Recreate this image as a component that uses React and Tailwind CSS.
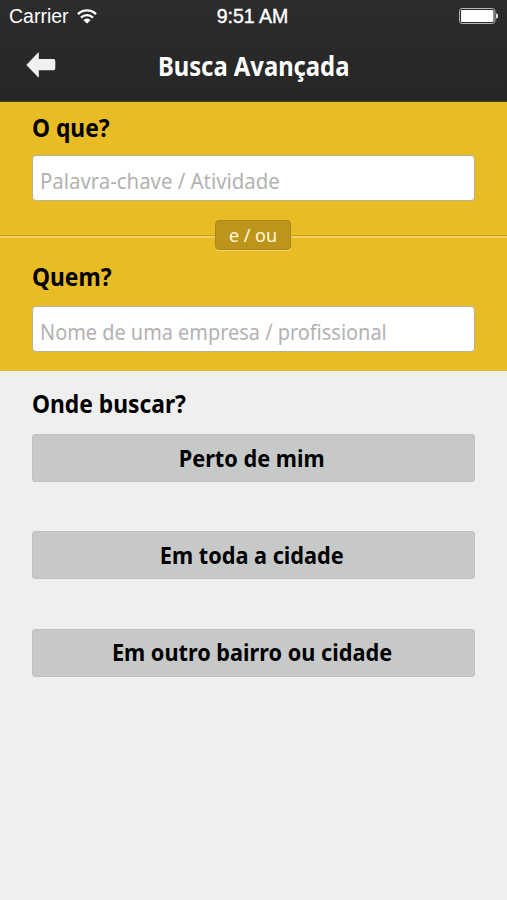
const places = [
  { id: 'near', label: 'Perto de mim' },
  { id: 'city', label: 'Em toda a cidade' },
  { id: 'other', label: 'Em outro bairro ou cidade' },
];

function WifiIcon() {
  return (
    <svg className="ml-[8px] h-[15px] w-[20px]" viewBox="0 0 20 15" fill="none">
      <path d="M1 5.1a12.7 12.7 0 0 1 18 0" stroke="#fff" strokeWidth="2.4" />
      <path d="M4 8.6a8.6 8.6 0 0 1 12 0" stroke="#fff" strokeWidth="2.3" />
      <path d="M6.4 11.2a4.9 4.9 0 0 1 7.2 0L10 14.6z" fill="#fff" />
    </svg>
  );
}

function BatteryIcon() {
  return (
    <svg className="h-[16px] w-[39px]" viewBox="0 0 39 16">
      <rect x="0.5" y="0.5" width="35.5" height="15" rx="2.6" fill="#2a2a2a" stroke="#b5b5b5" />
      <rect x="2" y="2" width="32.5" height="12" rx="1" fill="#fff" />
      <path d="M37.2 5.2c2.4.5 2.4 5 0 5.5z" fill="#fff" />
    </svg>
  );
}

function BackArrow() {
  return (
    <svg className="h-[26px] w-[30px]" viewBox="0 0 30 26">
      <path d="M0.3 13 12.2.4Q12.8 0 12.8.8V7H27.5Q29.3 7 29.3 9V16.5Q29.3 18.3 27.5 18.3H12.8V25Q12.8 25.8 12.2 25.3Z" fill="#f0f0f0" />
    </svg>
  );
}

function Label({ children }) {
  return (
    <h2 className="h-[32px] text-[25px] leading-[32px] font-bold">
      <span className="inline-block origin-left scale-x-[0.912]">{children}</span>
    </h2>
  );
}

function Field({ children }) {
  return (
    <div className="flex h-[46px] items-center rounded-[4px] border border-[#b7b09a] bg-white px-[7px] pt-[4px] text-[22px] whitespace-nowrap text-[#b2b2b2]">
      {children}
    </div>
  );
}

export default function App() {
  return (
    <div className="flex h-[900px] w-[507px] flex-col overflow-hidden bg-[#efefef] font-['Noto_Sans',sans-serif] text-black">
      <header className="h-[102px] border-b border-[#4a3f1c] bg-linear-to-b from-[#2c2c2c] to-[#262626] text-white">
        <div className="grid h-[32px] grid-cols-3 items-center px-[9px] font-['Liberation_Sans',sans-serif] text-[19.5px]">
          <div className="flex items-center"><span className="pt-[2px]">Carrier</span><WifiIcon /></div>
          <div className="pt-[2px] pr-[2px] text-center [-webkit-text-stroke:0.4px_white]">9:51 AM</div>
          <div className="flex justify-end"><BatteryIcon /></div>
        </div>
        <div className="grid h-[69px] grid-cols-[60px_1fr_60px] items-center">
          <button className="pb-[4px] pl-[26px]"><BackArrow /></button>
          <h1 className="text-center text-[26px] font-bold">
            <span className="inline-block scale-x-[0.915]">Busca Avançada</span>
          </h1>
        </div>
      </header>

      <section className="h-[269px] bg-[#e8bc25] pt-[9px]">
        <div className="flex flex-col gap-[12px] px-[32px]">
          <Label>O que?</Label>
          <Field><span className="origin-left scale-x-[0.926]">Palavra-chave / Atividade</span></Field>
        </div>

        {/* separator with the "and / or" pill */}
        <div className="mt-[19px] flex h-[30px] items-center">
          <div className="mt-[2px] h-[3px] w-[215px] border-t border-b-2 border-t-[#c8a01e] border-b-[#f0cf60]" />
          <div className="flex h-[30px] w-[76px] items-center justify-center rounded-[4px] border border-[#ad8719] bg-[#be951b] text-[18px] text-[#fff8df] shadow-[0_1px_0_#f2d469]">e / ou</div>
          <div className="mt-[2px] h-[3px] flex-1 border-t border-b-2 border-t-[#c8a01e] border-b-[#f0cf60]" />
        </div>

        <div className="mt-[10px] flex flex-col gap-[14px] px-[32px]">
          <Label>Quem?</Label>
          <Field><span className="origin-left scale-x-[0.905]">Nome de uma empresa / profissional</span></Field>
        </div>
      </section>

      <main className="px-[32px] pt-[16px]">
        <Label>Onde buscar?</Label>
        <div className="mt-[15px] flex flex-col gap-[49.4px]">
          {places.map((p) => (
            <button key={p.id} className="h-[48px] rounded-[3px] border border-[#c0c2c2] bg-[#c7c9c9] pr-[3px] pb-px text-[24px] font-bold">
              <span className="inline-block scale-x-[0.904]">{p.label}</span>
            </button>
          ))}
        </div>
      </main>
    </div>
  );
}
